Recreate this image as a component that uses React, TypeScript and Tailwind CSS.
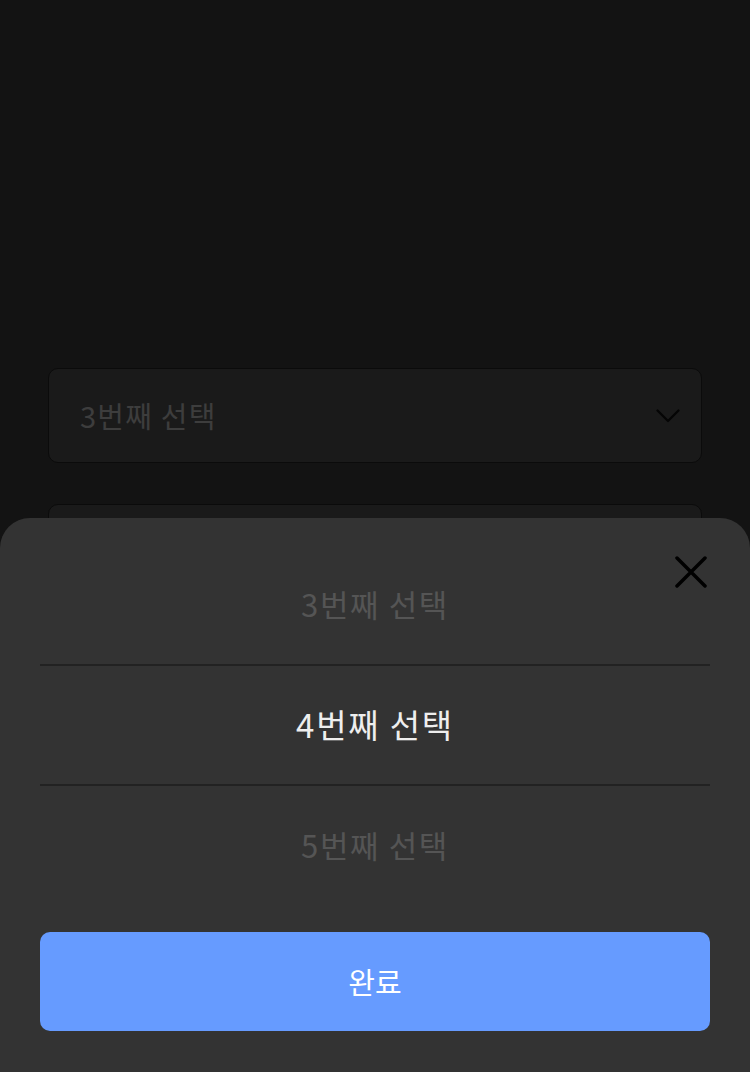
import { useState } from "react";

const options = ["1번째 선택", "2번째 선택", "3번째 선택", "4번째 선택", "5번째 선택", "6번째 선택"];

const ChevronDown = () => (
  <svg width="24" height="14" viewBox="0 0 24 14" fill="none">
    <path d="M1.5 1.5 L12 12 L22.5 1.5" stroke="#050505" strokeWidth="2.2" strokeLinecap="round" strokeLinejoin="round" />
  </svg>
);

const CloseIcon = () => (
  <svg width="32" height="32" viewBox="0 0 32 32" fill="none">
    <path d="M2 2 L30 30 M30 2 L2 30" stroke="#000" strokeWidth="3.5" strokeLinecap="round" />
  </svg>
);

const SelectBox = ({ label }: { label?: string }) => {
  return (
    <div className="flex h-[95px] items-center justify-between rounded-[10px] border border-[#0b0b0b] bg-[#1a1a1a] pl-[31px] pr-[21px]">
      <span className="text-[29px] tracking-[1.2px] text-[#3d3d3d]">{label}</span>
      <ChevronDown />
    </div>
  );
};

const App = () => {
  const [selected] = useState(3);
  const visible = [selected - 1, selected, selected + 1];

  return (
    <div className="relative h-[1072px] w-[750px] overflow-hidden bg-[#131313] font-['Noto_Sans_CJK_KR','Noto_Sans',sans-serif]">
      <div className="flex flex-col gap-[41px] px-[48px] pt-[368px]">
        <SelectBox label="3번째 선택" />
        <SelectBox label="" />
      </div>

      {/* bottom sheet */}
      <div className="absolute inset-x-0 bottom-0 flex h-[554px] flex-col rounded-t-[30px] bg-[#333333] px-[40px] pb-[41px] pt-[27px]">
        <button className="absolute right-[43px] top-[38px]">
          <CloseIcon />
        </button>

        <div className="flex flex-col">
          {visible.map((i, idx) => (
            <div
              key={i}
              className={
                idx === 1
                  ? "flex h-[122px] items-center justify-center border-y-2 border-[#222222]"
                  : "flex h-[119px] items-center justify-center"
              }
            >
              <span
                className={
                  idx === 1
                    ? "text-[33px] tracking-[1.8px] text-[#eeeeee]"
                    : "text-[31px] tracking-[1.6px] text-[#555555]"
                }
              >
                {options[i]}
              </span>
            </div>
          ))}
        </div>

        <button className="mt-auto flex h-[99px] items-center justify-center rounded-[10px] bg-[#669bff] text-[29px] text-white">
          완료
        </button>
      </div>
    </div>
  );
};

export default App;
